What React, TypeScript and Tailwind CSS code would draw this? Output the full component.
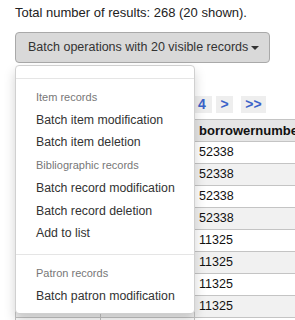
import React from 'react';

const rows = ['52338', '52338', '52338', '52338', '11325', '11325', '11325', '11325', ''];

type MenuEntry =
  | { kind: 'divider' }
  | { kind: 'header'; label: string }
  | { kind: 'item'; label: string };

const menu: MenuEntry[] = [
  { kind: 'divider' },
  { kind: 'header', label: 'Item records' },
  { kind: 'item', label: 'Batch item modification' },
  { kind: 'item', label: 'Batch item deletion' },
  { kind: 'header', label: 'Bibliographic records' },
  { kind: 'item', label: 'Batch record modification' },
  { kind: 'item', label: 'Batch record deletion' },
  { kind: 'item', label: 'Add to list' },
  { kind: 'divider' },
  { kind: 'header', label: 'Patron records' },
  { kind: 'item', label: 'Batch patron modification' },
];

export default function App() {
  return (
    <div className="relative w-[295px] h-[320px] overflow-hidden bg-white font-['Liberation_Sans',Arial,sans-serif] text-[#222]">
      <div className="pl-[15px] pt-[5px]">
        <p className="text-[13px] leading-[16px]">Total number of results: 268 (20 shown).</p>

        <button
          type="button"
          className="mt-[11px] flex h-[31px] w-[255px] items-center whitespace-nowrap rounded-[4px] border border-[#a9a9a9] bg-[#d9d9d9] pl-[12px] text-[12.5px] text-[#333]"
        >
          Batch operations with 20 visible records
          <span className="ml-[3px] mt-[1px] h-0 w-0 border-x-[4px] border-t-[4px] border-x-transparent border-t-[#333]" />
        </button>

        <div className="mt-[33px] flex h-[17px] items-stretch pl-[177px] text-[14px] font-bold text-[#3a63c9]">
          <span className="flex w-[20px] items-center justify-center bg-[#eeeeee]">4</span>
          <span className="ml-[4px] flex w-[17px] items-center justify-center bg-[#eeeeee]">&gt;</span>
          <span className="ml-[8px] flex w-[25px] items-center justify-center bg-[#eeeeee]">&gt;&gt;</span>
        </div>

        <table className="mt-[6px] w-[320px] table-fixed border-collapse text-[12.5px] text-[#111]">
          <colgroup>
            <col className="w-[85px]" />
            <col className="w-[94px]" />
            <col />
          </colgroup>
          <thead>
            <tr className="h-[22px] bg-[#e6e6e6]">
              <th className="border border-[#c4c4c4] px-[4px]"></th>
              <th className="border border-[#c4c4c4] px-[4px]"></th>
              <th className="whitespace-nowrap border border-[#c4c4c4] px-[4px] text-left text-[13px]">borrowernumber</th>
            </tr>
          </thead>
          <tbody>
            {rows.map((n, i) => (
              <tr key={i} className={`h-[22px] ${i % 2 === 1 ? 'bg-[#f1f1f1]' : 'bg-white'}`}>
                <td className="border border-[#c4c4c4] px-[4px]"></td>
                <td className="border border-[#c4c4c4] px-[4px]"></td>
                <td className="border border-[#c4c4c4] px-[4px]">{n}</td>
              </tr>
            ))}
          </tbody>
        </table>
      </div>

      <ul className="absolute left-[15px] top-[65px] w-[180px] rounded-[4px] border border-[#d0d0d0] bg-white pb-[6px] pt-[12px] shadow-[0_6px_12px_rgba(0,0,0,0.18)]">
        {menu.map((m, i) => {
          if (m.kind === 'divider') {
            return <li key={i} className={`${i === 0 ? 'mb-[7px]' : 'mb-[7px] mt-[9px]'} h-px bg-[#e5e5e5]`} />;
          }
          if (m.kind === 'header') {
            return (
              <li key={i} className="pl-[20px] text-[11px] leading-[22.7px] text-[#777]">
                {m.label}
              </li>
            );
          }
          return (
            <li key={i} className="whitespace-nowrap pl-[20px] text-[12.3px] leading-[22.7px] text-[#333]">
              {m.label}
            </li>
          );
        })}
      </ul>
    </div>
  );
}
